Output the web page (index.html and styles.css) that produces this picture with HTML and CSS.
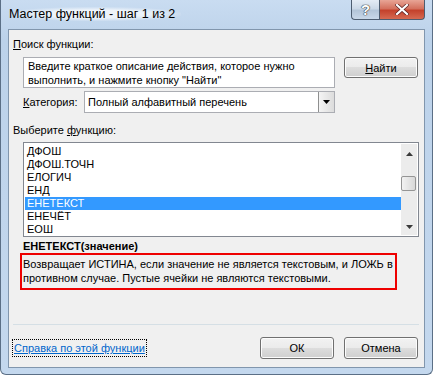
FILE: index.html
```html
<!DOCTYPE html>
<html lang="ru">
<head>
    <meta charset="UTF-8">
    <meta name="viewport" content="width=device-width, initial-scale=1.0">
    <title>Мастер функций</title>
    <link rel="stylesheet" href="styles.css">
</head>
<body>
    <div class="window">
        <div class="titlebar">
            <span class="title">Мастер функций - шаг 1 из 2</span>
            <div class="caption-btns">
                <div class="cap-btn help">?</div>
                <div class="cap-btn close">
                    <svg width="14" height="11" viewBox="0 0 14 11">
                        <path d="M2 1 L12 10 M12 1 L2 10" stroke="#5a2020" stroke-width="3.6" stroke-linecap="square"/>
                        <path d="M2 1 L12 10 M12 1 L2 10" stroke="#fff" stroke-width="2.2" stroke-linecap="square"/>
                    </svg>
                </div>
            </div>
        </div>

        <div class="client">
            <div class="label"><u>П</u>оиск функции:</div>

            <div class="search-row">
                <div class="search-box">Введите краткое описание действия, которое нужно выполнить, и нажмите кнопку "Найти"</div>
                <div class="btn find-btn"><u>Н</u>айти</div>
            </div>

            <div class="cat-row">
                <span class="cat-label"><u>К</u>атегория:</span>
                <div class="select">
                    <span class="select-text">Полный алфавитный перечень</span>
                    <div class="select-arrow">
                        <svg width="7" height="4" viewBox="0 0 7 4"><path d="M0 0 H7 L3.5 4 Z" fill="#000"/></svg>
                    </div>
                </div>
            </div>

            <div class="label label-list">Выберите <u>ф</u>ункцию:</div>

            <div class="listbox">
                <ul class="items">
                    <li>ДФОШ</li>
                    <li>ДФОШ.ТОЧН</li>
                    <li>ЕЛОГИЧ</li>
                    <li>ЕНД</li>
                    <li class="selected">ЕНЕТЕКСТ</li>
                    <li>ЕНЕЧЁТ</li>
                    <li>ЕОШ</li>
                </ul>
                <div class="scrollbar">
                    <svg class="sb-arrow" width="7" height="4" viewBox="0 0 7 4"><path d="M3.5 0 L7 4 H0 Z" fill="#3a3a3a"/></svg>
                    <div class="sb-track">
                        <div class="sb-thumb"></div>
                    </div>
                    <svg class="sb-arrow" width="7" height="4" viewBox="0 0 7 4"><path d="M0 0 H7 L3.5 4 Z" fill="#3a3a3a"/></svg>
                </div>
            </div>

            <div class="func-name">ЕНЕТЕКСТ(значение)</div>
            <div class="func-desc">Возвращает ИСТИНА, если значение не является текстовым, и ЛОЖЬ в противном случае. Пустые ячейки не являются текстовыми.</div>

            <div class="separator"></div>

            <div class="footer">
                <a href="#" class="help-link">Справка по этой функции</a>
                <div class="footer-btns">
                    <div class="btn">ОК</div>
                    <div class="btn">Отмена</div>
                </div>
            </div>
        </div>
    </div>
</body>
</html>
```

FILE: styles.css
```css
:root {
    --frame: #c2d7ee;
    --client: #f0f0f0;
    --text: #000;
    --select: #3399ff;
    --link: #0066cc;
}

html, body {
    margin: 0;
    padding: 0;
}

body {
    width: 433px;
    height: 375px;
    overflow: hidden;
    font-family: "Liberation Sans", Arial, sans-serif;
    font-size: 11px;
    color: var(--text);
}

.window {
    box-sizing: border-box;
    width: 433px;
    height: 375px;
    border: 1px solid #5b6f86;
    border-top: none;
    border-radius: 0 0 6px 6px;
    background: linear-gradient(to bottom, #c9dcf1 0, #bcd2ea 40px, #c4d8ee 100%);
    display: flex;
    flex-direction: column;
}

.titlebar {
    height: 28px;
    display: flex;
    justify-content: space-between;
    align-items: flex-start;
}

.title {
    margin: 7px 0 0 8px;
    padding: 0 6px 0 0;
    font-size: 12.5px;
    background: radial-gradient(ellipse at center, rgba(255,255,255,0.7) 40%, rgba(255,255,255,0) 75%);
}

.caption-btns {
    display: flex;
    margin-right: 7px;
}

.cap-btn {
    box-sizing: border-box;
    height: 20px;
    border: 1px solid #4d5d70;
    border-top: none;
    display: flex;
    align-items: center;
    justify-content: center;
}

.help {
    width: 28px;
    border-radius: 0 0 0 4px;
    border-right: none;
    background: linear-gradient(to bottom, #e4ecf5 0, #ccd9e7 45%, #b3c5d8 55%, #c9d8e9 100%);
    color: #fff;
    font-weight: bold;
    font-size: 15px;
    text-shadow: 0 0 1px #333, 0 0 1px #333, 0 0 1px #333;
}

.close {
    width: 46px;
    border-radius: 0 0 4px 0;
    background: linear-gradient(to bottom, #e8a596 0, #d4715e 45%, #c4422c 55%, #d66a52 100%);
}

.client {
    flex: 1;
    margin: 1px 7px 6px 7px;
    border: 1px solid #8196ad;
    background: var(--client);
    padding: 0 0 0 4px;
    display: flex;
    flex-direction: column;
}

.label {
    margin-top: 7px;
    height: 14px;
    line-height: 14px;
}

.search-row {
    display: flex;
    align-items: flex-start;
    margin: 6px 0 0 10px;
    gap: 9px;
}

.search-box {
    box-sizing: border-box;
    width: 312px;
    height: 31px;
    border: 1px solid #abadb3;
    background: #fff;
    padding: 1px 4px;
    line-height: 14px;
}

.btn {
    box-sizing: border-box;
    width: 74px;
    height: 22px;
    border: 1px solid #707070;
    border-radius: 3px;
    background: linear-gradient(to bottom, #f2f2f2 0, #ebebeb 50%, #dddddd 50%, #cfcfcf 100%);
    box-shadow: inset 0 0 0 1px #fcfcfc;
    display: flex;
    align-items: center;
    justify-content: center;
}

.find-btn {
    height: 21px;
}

.cat-row {
    display: flex;
    align-items: center;
    margin: 3px 0 0 10px;
}

.cat-label {
    width: 61px;
}

.select {
    box-sizing: border-box;
    width: 251px;
    height: 22px;
    border: 1px solid #abadb3;
    background: #fff;
    display: flex;
    align-items: center;
    justify-content: space-between;
}

.select-text {
    padding-left: 3px;
}

.select-arrow {
    box-sizing: border-box;
    width: 16px;
    height: 20px;
    border-left: 1px solid #8e8f8f;
    background: linear-gradient(to right, #f4f4f4, #dcdcdc);
    display: flex;
    align-items: center;
    justify-content: center;
}

.label-list {
    margin-top: 10px;
}

.listbox {
    box-sizing: border-box;
    width: 396px;
    height: 95px;
    margin: 5px 0 0 10px;
    border: 1px solid #828790;
    background: #fff;
    display: flex;
    padding: 1px;
}

.items {
    list-style: none;
    margin: 1px 0 0 0;
    padding: 0;
    flex: 1;
}

.items li {
    height: 13px;
    line-height: 13px;
    padding-left: 2px;
}

.items .selected {
    background: var(--select);
    color: #fff;
}

.scrollbar {
    width: 16px;
    background: #ececec;
    display: flex;
    flex-direction: column;
    align-items: center;
}

.sb-arrow {
    margin: 8px 0 6px;
}

.sb-track {
    flex: 1;
    width: 16px;
    display: flex;
    flex-direction: column;
}

.sb-thumb {
    box-sizing: border-box;
    margin-top: 14px;
    width: 15px;
    height: 15px;
    border: 1px solid #959595;
    border-radius: 2px;
    background: linear-gradient(to right, #f2f2f2, #d8d8d8);
}

.func-name {
    margin: 2px 0 0 10px;
    font-weight: bold;
    height: 14px;
    line-height: 14px;
}

.func-desc {
    box-sizing: border-box;
    width: 377px;
    height: 37px;
    margin: 0 0 0 7px;
    border: 2px solid #ee0000;
    padding: 2px 1px;
    line-height: 14px;
}

.separator {
    height: 1px;
    margin: 34px 5px 0 0;
    background: #d5dfe5;
}

.footer {
    display: flex;
    justify-content: space-between;
    align-items: center;
    margin-top: 12px;
}

.help-link {
    color: var(--link);
    outline: 1px dotted #000;
    outline-offset: 0;
    padding: 1px 1px;
    line-height: 14px;
}

.footer-btns {
    display: flex;
    gap: 10px;
    margin-right: 6px;
}
```
